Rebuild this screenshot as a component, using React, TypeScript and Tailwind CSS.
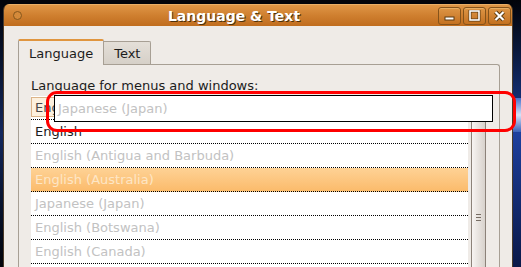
import React from 'react';

const rows = [
  { label: 'English', tone: 'normal' },
  { label: 'English (Antigua and Barbuda)', tone: 'dim' },
  { label: 'English (Australia)', tone: 'selected' },
  { label: 'Japanese (Japan)', tone: 'dim' },
  { label: 'English (Botswana)', tone: 'dim' },
  { label: 'English (Canada)', tone: 'dim' },
  { label: 'English (Denmark)', tone: 'dim' },
];

function TitleButton({ children }: { children: React.ReactNode }) {
  return (
    <div className="w-[23px] h-[18px] rounded-[3px] border border-[#85531a] bg-linear-to-b from-[#dd9545] to-[#c4711f] shadow-[inset_0_1px_0_#e9ae62] flex items-center justify-center">
      {children}
    </div>
  );
}

export default function App() {
  return (
    <div className="relative w-[521px] h-[267px] overflow-hidden bg-[#02040a] flex font-['DejaVu_Sans',sans-serif] text-[13px]">
      {/* desktop edge on the left */}
      <div className="w-[3px] flex-none bg-linear-to-b from-[#02040a] via-[#14285e] to-[#02040a]" />

      {/* Window */}
      <div className="mt-[4px] w-[510px] flex-none flex flex-col rounded-t-[6px] overflow-hidden border-x border-[#4a3a28]">
        {/* Title bar */}
        <div className="h-[22px] flex-none flex items-center bg-linear-to-b from-[#de9646] via-[#cf7f2f] to-[#c06d1e] border-t border-[#e9ae66]">
          <div className="ml-[9px] w-[9px] h-[9px] rounded-full border border-[#85561c] bg-[#d58a3a]" />
          <div className="flex-1 text-center font-bold text-[14px] text-white [text-shadow:1px_1px_0_#4e300a] leading-[16px] pl-[8px]">
            Language &amp; Text
          </div>
          <div className="flex gap-[2px] mr-[1px] mt-[1px]">
            <TitleButton>
              <svg width="13" height="12" viewBox="0 0 13 12">
                <rect x="1.5" y="6.5" width="10" height="4" fill="#5a3a12" />
                <rect x="2.5" y="7.5" width="8" height="2" fill="#fff" />
              </svg>
            </TitleButton>
            <TitleButton>
              <svg width="13" height="12" viewBox="0 0 13 12">
                <rect x="2" y="1" width="9" height="9" fill="none" stroke="#5a3a12" strokeWidth="3" />
                <rect x="2" y="1" width="9" height="9" fill="none" stroke="#fff" strokeWidth="1.6" />
              </svg>
            </TitleButton>
            <TitleButton>
              <svg width="13" height="12" viewBox="0 0 13 12">
                <path d="M2.5 2 L10.5 10 M10.5 2 L2.5 10" stroke="#5a3a12" strokeWidth="4" />
                <path d="M2.5 2 L10.5 10 M10.5 2 L2.5 10" stroke="#fff" strokeWidth="2.2" />
              </svg>
            </TitleButton>
          </div>
        </div>

        {/* Body */}
        <div className="flex-1 bg-[#efebe7] pt-[13px] pl-[14px] pr-[12px] flex flex-col">
          {/* Tabs */}
          <div className="flex items-end h-[26px] relative z-10">
            <div className="h-[26px] px-[10px] border-x border-t-2 border-x-[#a79f94] border-t-[#e0953f] bg-[#efebe7] text-[#1c1c1c] flex items-center leading-[15px] rounded-t-[2px]">
              Language
            </div>
            <div className="h-[23px] px-[10px] border-r border-t border-[#a79f94] bg-linear-to-b from-[#e4dfd8] to-[#d6d0c8] text-[#1c1c1c] flex items-center leading-[15px] mb-[1px] rounded-tr-[2px]">
              Text
            </div>
          </div>

          {/* Panel */}
          <div className="-mt-[1px] flex-1 border-x border-t border-[#a79f94] rounded-tr-[3px] pt-[13px] pl-[12px] pr-[13px]">
            <div className="leading-[15px] text-[#1c1c1c]">Language for menus and windows:</div>
            <div className="mt-[3px] flex">
              <div className="w-[437px] bg-white flex flex-col">
                <div className="h-[24px] border-b border-dotted border-black pt-[1px] pb-[2px]">
                  <div className="h-full w-[60px] border border-[#dcb58a] bg-[#fcf0de] pl-[3px] flex items-center text-[#4a4a4a] leading-[15px]">
                    English
                  </div>
                </div>
                {rows.map((r) => (
                  <div
                    key={r.label}
                    className={`h-[24px] border-b border-dotted border-black pl-[4px] flex items-center leading-[15px] ${
                      r.tone === 'selected'
                        ? 'bg-linear-to-b from-[#fed295] to-[#fbbb6b] text-[#fde6c6]'
                        : r.tone === 'normal'
                        ? 'text-[#1c1c1c]'
                        : 'text-[#c2c2c2]'
                    }`}
                  >
                    {r.label}
                  </div>
                ))}
              </div>
              {/* Scrollbar */}
              <div className="w-[18px] pl-[3px] -mt-[1px]">
                <div className="w-[15px] h-[260px] border-x border-t border-x-[#8c8279] border-t-[#a49c94] bg-linear-to-r from-[#f7f4f2] to-[#d8d2cc] flex flex-col items-center pt-[118px] gap-[2px]">
                  <div className="w-[5px] h-[1px] bg-[#776d64]" />
                  <div className="w-[5px] h-[1px] bg-[#776d64]" />
                  <div className="w-[5px] h-[1px] bg-[#776d64]" />
                </div>
              </div>
            </div>
          </div>
        </div>
      </div>

      {/* desktop edge on the right */}
      <div className="flex-1 bg-linear-to-b from-[#02040a] via-[#1d3f9e] to-[#0a1848] relative">
        <div className="absolute left-0 right-0 top-[98px] h-[34px] bg-linear-to-b from-[#4a70c8] via-[#d8e2f6] to-[#3a60b8]" />
      </div>

      {/* Overlay: popup entry */}
      <div className="absolute left-[54px] top-[95px] w-[439px] h-[27px] border border-black bg-white pl-[3px] flex items-center text-[#c2c2c2] leading-[15px]">
        Japanese (Japan)
      </div>
      {/* Overlay: red annotation */}
      <div className="absolute left-[46px] top-[91px] w-[470px] h-[41px] border-[3px] border-[#ff0000] rounded-[11px]" />
    </div>
  );
}
